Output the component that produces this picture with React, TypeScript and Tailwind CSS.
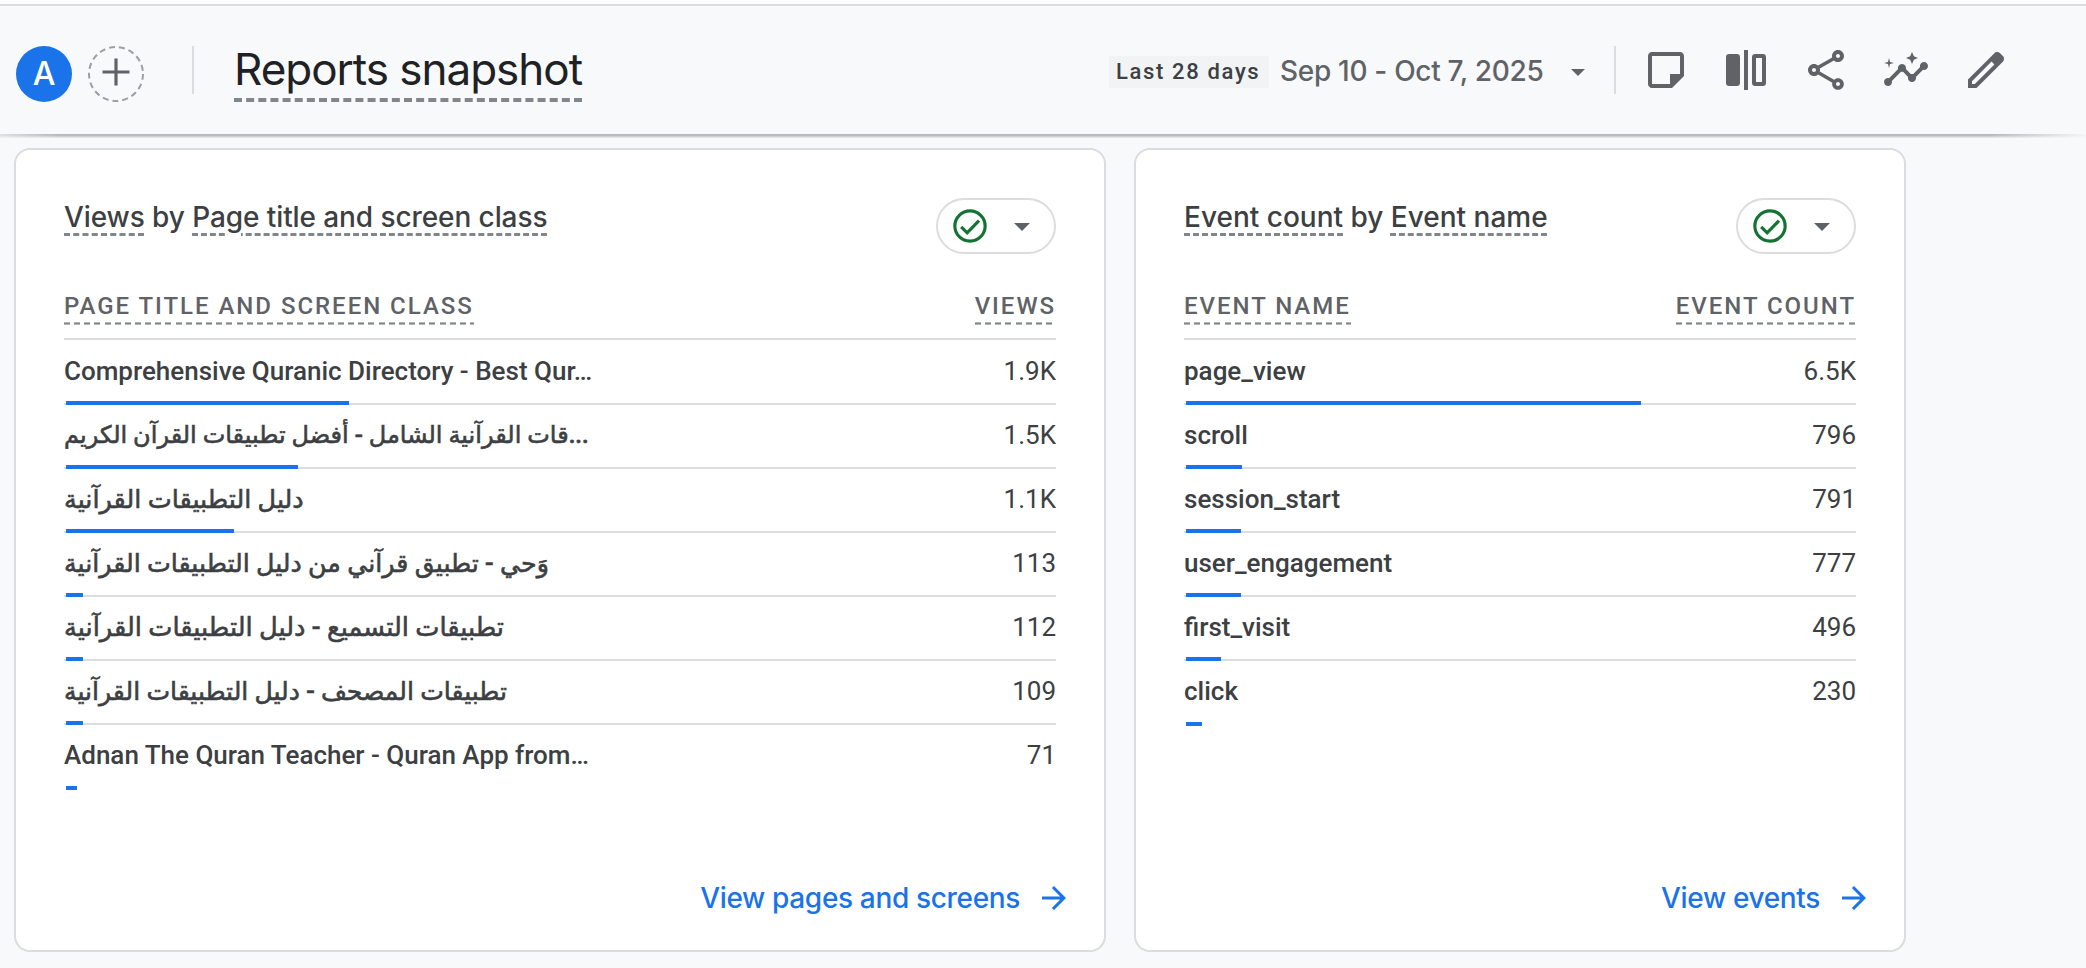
import type { ReactNode } from "react";
import { MdArrowForward, MdInsights, MdOutlineShare } from "react-icons/md";

type Row = { label: string; value: string; bar: number; rtlSize?: number };

const pages: Row[] = [
  { label: "Comprehensive Quranic Directory - Best Qur…", value: "1.9K", bar: 283 },
  { label: "...قات القرآنية الشامل - أفضل تطبيقات القرآن الكريم", value: "1.5K", bar: 232, rtlSize: 24 },
  { label: "دليل التطبيقات القرآنية", value: "1.1K", bar: 168, rtlSize: 25.5 },
  { label: "وَحي - تطبيق قرآني من دليل التطبيقات القرآنية", value: "113", bar: 17, rtlSize: 25.3 },
  { label: "تطبيقات التسميع - دليل التطبيقات القرآنية", value: "112", bar: 17, rtlSize: 25.7 },
  { label: "تطبيقات المصحف - دليل التطبيقات القرآنية", value: "109", bar: 17, rtlSize: 25.1 },
  { label: "Adnan The Quran Teacher - Quran App from…", value: "71", bar: 11 },
];

const events: Row[] = [
  { label: "page_view", value: "6.5K", bar: 455 },
  { label: "scroll", value: "796", bar: 56 },
  { label: "session_start", value: "791", bar: 55 },
  { label: "user_engagement", value: "777", bar: 55 },
  { label: "first_visit", value: "496", bar: 35 },
  { label: "click", value: "230", bar: 16 },
];

function NoteIcon() {
  return (
    <svg viewBox="0 0 24 24" className="size-12" fill="currentColor">
      <path d="M19 5v9h-5v5H5V5h14m0-2H5c-1.1 0-2 .9-2 2v14c0 1.1.9 2 2 2h10l6-6V5c0-1.1-.9-2-2-2z" />
    </svg>
  );
}

function CompareIcon() {
  return (
    <svg viewBox="0 0 24 24" className="size-12" fill="currentColor">
      <rect x="2" y="4" width="7" height="16" rx="1.6" />
      <path d="M11 2h2v20h-2z" />
      <path
        fillRule="evenodd"
        d="M16.6 4h3.8A1.6 1.6 0 0 1 22 5.6v12.8a1.6 1.6 0 0 1-1.6 1.6h-3.8a1.6 1.6 0 0 1-1.6-1.6V5.6A1.6 1.6 0 0 1 16.6 4zM17 6v12h3V6z"
      />
    </svg>
  );
}

function EditIcon() {
  return (
    <svg viewBox="0 -960 960 960" className="size-12" fill="currentColor">
      <path d="M200-200h57l391-391-57-57-391 391v57Zm-80 80v-170l528-527q12-11 26.5-17t30.5-6q16 0 31 6t26 18l55 56q12 11 17.5 26t5.5 30q0 16-5.5 30.5T817-647L290-120H120Z" />
    </svg>
  );
}

function StatusPill() {
  return (
    <button className="flex h-14 w-[120px] items-center rounded-full border-2 border-[#dadce0] pl-3">
      <svg viewBox="0 0 24 24" className="size-10" fill="none" stroke="#137333">
        <circle cx="12" cy="12" r="9.1" strokeWidth="1.9" />
        <path d="M6.7 12.5l3.6 3.6 7.1-7.3" strokeWidth="1.9" />
      </svg>
      <svg viewBox="0 0 16 8" className="mt-[1px] ml-6 h-2 w-4" fill="#5f6368">
        <path d="M0 0h16l-8 8z" />
      </svg>
    </button>
  );
}

function Term({ children }: { children: ReactNode }) {
  return (
    <span className="underline decoration-[#80868b] decoration-dashed decoration-[3px] underline-offset-[6px]">
      {children}
    </span>
  );
}

function ColumnLabel({ children }: { children: ReactNode }) {
  return (
    <span className="bg-[repeating-linear-gradient(90deg,#80868b_0_6px,transparent_6px_10.15px),repeating-linear-gradient(90deg,#80868b99_0_6px,transparent_6px_10.15px)] [background-size:100%_1px,100%_3px] [background-position:0_calc(100%_-_1px),0_100%] bg-no-repeat pb-[5px] font-[Roboto,sans-serif] text-[24px] leading-[28px] font-medium tracking-[1.97px]">
      {children}
    </span>
  );
}

function TableRow({ row, first, last }: { row: Row; first: boolean; last: boolean }) {
  return (
    <div
      className={`relative flex justify-between border-b-2 text-[26px] leading-[31px] text-[#3c4043] ${
        first ? "h-[65px] pt-4" : last ? "h-[65px] pt-[15px]" : "h-16 pt-[15px]"
      } ${last ? "border-transparent" : "border-[#dadce0]"}`}
    >
      {row.rtlSize ? (
        <span
          dir="rtl"
          className="h-[31px] font-[Roboto,'DejaVu_Sans',sans-serif] font-medium whitespace-nowrap [-webkit-text-stroke:0.6px_#3c4043]"
          style={{ fontSize: row.rtlSize }}
        >
          {row.label}
        </span>
      ) : (
        <span className="font-medium whitespace-nowrap">{row.label}</span>
      )}
      <span>{row.value}</span>
      <div className="absolute -bottom-0.5 left-0.5 h-1 bg-[#1a73e8]" style={{ width: row.bar }} />
    </div>
  );
}

type CardProps = {
  title: ReactNode;
  columns: [string, string];
  rows: Row[];
  link: string;
  width: string;
};

function Card({ title, columns, rows, link, width }: CardProps) {
  return (
    <section
      className={`flex h-[804px] flex-col rounded-2xl border-2 border-[#dadce0] bg-white px-12 pt-12 pb-[34px] ${width}`}
    >
      <div className="flex h-14 items-start justify-between">
        <h2 className="mt-px font-[Inter,sans-serif] text-[28px] leading-[36px] font-[450] whitespace-nowrap text-[#3c4043]">
          {title}
        </h2>
        <StatusPill />
      </div>
      <div className="mt-[38px] flex justify-between border-b-2 border-[#dadce0] pb-[13px] text-[#5f6368]">
        <ColumnLabel>{columns[0]}</ColumnLabel>
        <ColumnLabel>{columns[1]}</ColumnLabel>
      </div>
      <div className="font-[Roboto,sans-serif]">
        {rows.map((row, i) => (
          <TableRow key={row.label} row={row} first={i === 0} last={i === rows.length - 1} />
        ))}
      </div>
      <a className="mt-auto -mr-4 flex items-center gap-4 self-end text-[#1a73e8]">
        <span className="font-[Inter,sans-serif] text-[28px] leading-[36px] font-medium tracking-[-0.34px] whitespace-nowrap">
          {link}
        </span>
        <MdArrowForward className="size-9" />
      </a>
    </section>
  );
}

export default function App() {
  return (
    <div className="h-[968px] w-[2086px] overflow-hidden bg-[#f8f9fb]">
      <div className="h-1.5 border-b-2 border-[#dadce0] bg-white" />
      <header className="flex h-32 items-start pt-10 pl-4 text-[#5f6368]">
        <div className="flex size-14 items-center justify-center rounded-full bg-[#1a73e8] font-[Inter,sans-serif] text-[32px] leading-10 font-medium text-white">
          A
        </div>
        <svg viewBox="0 0 56 56" className="ml-4 size-14" fill="none">
          <circle cx="28" cy="28" r="27" stroke="#9aa0a6" strokeWidth="2" strokeDasharray="5.98 4" />
          <path d="M14.5 26h27M28 12.5v27" stroke="#5f6368" strokeWidth="3.2" />
        </svg>
        <div className="ml-12 h-12 w-0.5 bg-[#dadce0]" />
        <h1 className="-mt-[3px] ml-10 font-[Inter,sans-serif] text-[44px] leading-[52px] tracking-[-1.02px] whitespace-nowrap text-[#202124] underline decoration-[#80868b] decoration-dashed decoration-[4px] underline-offset-[13px]">
          Reports snapshot
        </h1>
        <div className="ml-auto flex pr-[76px]">
          <div className="mt-2.5 h-8 w-[160px] bg-[#f1f3f4] pl-[7px] font-[Roboto,sans-serif] text-[22px] leading-8 font-medium tracking-[1.65px] whitespace-nowrap text-[#3c4043]">
            Last 28 days
          </div>
          <div className="mt-[7px] ml-[11px] w-[264px] font-[Inter,sans-serif] text-[28px] leading-[36px] font-[450] tracking-[-0.3px] whitespace-nowrap">
            Sep 10 - Oct 7, 2025
          </div>
          <svg viewBox="0 0 14 7" className="mt-[23px] ml-[27px] h-[7px] w-[14px]" fill="#5f6368">
            <path d="M0 0h14l-7 7z" />
          </svg>
          <div className="ml-[29px] h-12 w-0.5 bg-[#dadce0]" />
          <div className="ml-[26px] flex gap-8">
            <NoteIcon />
            <CompareIcon />
            <MdOutlineShare className="size-12" />
            <MdInsights className="size-12" />
            <EditIcon />
          </div>
        </div>
      </header>
      <div className="h-1 bg-linear-to-b from-[#b5b7ba] from-30% to-[#eceef0] [mask-image:linear-gradient(to_right,rgba(0,0,0,0.4)_0,#000_60px,#000_1990px,rgba(0,0,0,0.05)_2086px)]" />
      <main className="mt-2.5 flex gap-7 pl-3.5">
        <Card
          width="w-[1092px]"
          title={
            <span className="tracking-[-0.09px]">
              <Term>Views</Term> by <Term>Page title and screen class</Term>
            </span>
          }
          columns={["PAGE TITLE AND SCREEN CLASS", "VIEWS"]}
          rows={pages}
          link="View pages and screens"
        />
        <Card
          width="w-[772px]"
          title={
            <>
              <Term>Event count</Term> by <Term>Event name</Term>
            </>
          }
          columns={["EVENT NAME", "EVENT COUNT"]}
          rows={events}
          link="View events"
        />
      </main>
    </div>
  );
}
